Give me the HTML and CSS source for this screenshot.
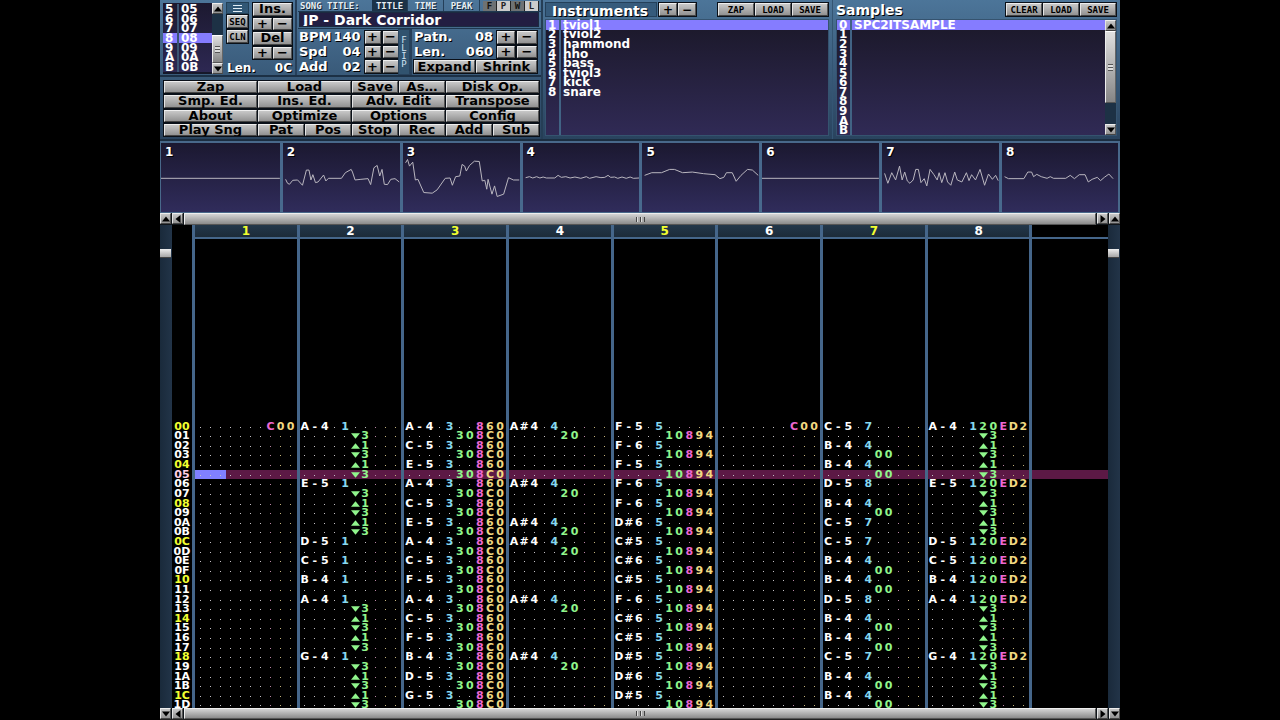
FILE: index.html
```html
<!DOCTYPE html>
<html lang="en">
<head>
<meta charset="utf-8">
<title>JP - Dark Corridor</title>
<link rel="stylesheet" href="styles.css">
</head>
<body>
<main class="app">
  <div class="top">
    <div class="left">
      <div class="control-row">
        <section class="orders">
          <ol class="order-list" aria-label="Order list">
            <li><b>5</b><span>05</span></li><li><b>6</b><span>06</span></li><li><b>7</b><span>07</span></li><li class="selected"><b>8</b><span>08</span></li><li><b>9</b><span>09</span></li><li><b>A</b><span>0A</span></li><li><b>B</b><span>0B</span></li>
          </ol>
          <div class="vscroll">
            <button class="btn arrow" aria-label="Order up"><svg viewBox="0 0 8 5"><path d="M4 0L8 5H0z"/></svg></button>
            <div class="track"><div class="thumb order-thumb"><i class="grip"></i></div></div>
            <button class="btn arrow" aria-label="Order down"><svg viewBox="0 0 8 5"><path d="M0 0H8L4 5z"/></svg></button>
          </div>
          <div class="order-tools">
            <div class="mini-col">
              <button class="menu" aria-label="Menu"><svg viewBox="0 0 9 7"><path d="M0 0H9V1H0zM0 3H9V4H0zM0 6H9V7H0z"/></svg></button>
              <button class="btn tiny">SEQ</button>
              <button class="btn tiny">CLN</button>
            </div>
            <div class="ins-grid">
              <button class="btn wide">Ins.</button>
              <button class="btn">+</button><button class="btn">−</button>
              <button class="btn wide">Del</button>
              <button class="btn">+</button><button class="btn">−</button>
            </div>
            <div class="order-len"><span>Len.</span><span>0C</span></div>
          </div>
        </section>
        <section class="song">
          <div class="tabs">
            <label for="song">SONG TITLE:</label>
            <button class="tab on">TITLE</button><button class="tab">TIME</button><button class="tab">PEAK</button>
            <div class="flags"><button class="flag on">F</button><button class="flag">P</button><button class="flag on">W</button><button class="flag">L</button></div>
          </div>
          <input id="song" class="title" type="text" value="JP - Dark Corridor">
          <div class="params">
            <div class="param-block tempo">
              <div class="param"><span>BPM</span><span>140</span><button class="btn">+</button><button class="btn">−</button></div>
              <div class="param"><span>Spd</span><span>04</span><button class="btn">+</button><button class="btn">−</button></div>
              <div class="param"><span>Add</span><span>02</span><button class="btn">+</button><button class="btn">−</button></div>
            </div>
            <button class="flip" aria-label="FLIP"><span>F</span><span>L</span><span>I</span><span>P</span></button>
            <div class="param-block patn">
              <div class="param"><span>Patn.</span><span>08</span><button class="btn">+</button><button class="btn">−</button></div>
              <div class="param"><span>Len.</span><span>060</span><button class="btn">+</button><button class="btn">−</button></div>
              <div class="pair"><button class="btn">Expand</button><button class="btn">Shrink</button></div>
            </div>
          </div>
        </section>
      </div>
      <nav class="commands">
        <button class="btn wide">Zap</button><button class="btn wide">Load</button><button class="btn">Save</button><button class="btn">As…</button><button class="btn wide">Disk Op.</button>
        <button class="btn wide">Smp. Ed.</button><button class="btn wide">Ins. Ed.</button><button class="btn wide">Adv. Edit</button><button class="btn wide">Transpose</button>
        <button class="btn wide">About</button><button class="btn wide">Optimize</button><button class="btn wide">Options</button><button class="btn wide">Config</button>
        <button class="btn wide">Play Sng</button><button class="btn">Pat</button><button class="btn">Pos</button><button class="btn">Stop</button><button class="btn">Rec</button><button class="btn">Add</button><button class="btn">Sub</button>
      </nav>
    </div>
    <section class="bank">
      <header><h2 class="boxed">Instruments</h2><button class="btn sign">+</button><button class="btn sign">−</button><span class="space"></span><button class="btn tiny act">ZAP</button><button class="btn tiny act">LOAD</button><button class="btn tiny act">SAVE</button></header>
      <div class="list-box">
        <ol class="list" aria-label="Instruments">
          <li class="selected"><b>1</b><span>tviol1</span></li><li><b>2</b><span>tviol2</span></li><li><b>3</b><span>hammond</span></li><li><b>4</b><span>hho</span></li><li><b>5</b><span>bass</span></li><li><b>6</b><span>tviol3</span></li><li><b>7</b><span>kick</span></li><li><b>8</b><span>snare</span></li><li><b></b></li><li><b></b></li><li><b></b></li><li><b></b></li>
        </ol>
      </div>
    </section>
    <section class="bank">
      <header><h2>Samples</h2><span class="space"></span><button class="btn tiny act">CLEAR</button><button class="btn tiny act">LOAD</button><button class="btn tiny act">SAVE</button></header>
      <div class="list-box">
        <ol class="list" aria-label="Samples">
          <li class="selected"><b>0</b><span>SPC2ITSAMPLE</span></li><li><b>1</b></li><li><b>2</b></li><li><b>3</b></li><li><b>4</b></li><li><b>5</b></li><li><b>6</b></li><li><b>7</b></li><li><b>8</b></li><li><b>9</b></li><li><b>A</b></li><li><b>B</b></li>
        </ol>
        <div class="vscroll">
          <button class="btn arrow" aria-label="Samples up"><svg viewBox="0 0 8 5"><path d="M4 0L8 5H0z"/></svg></button>
          <div class="track"><div class="thumb sample-thumb"><i class="grip"></i></div></div>
          <button class="btn arrow" aria-label="Samples down"><svg viewBox="0 0 8 5"><path d="M0 0H8L4 5z"/></svg></button>
        </div>
      </div>
    </section>
  </div>

  <section class="scopes" id="scopes" aria-label="Channel scopes"></section>

  <div class="hscroll">
    <button class="btn arrow" aria-label="Up"><svg viewBox="0 0 8 5"><path d="M4 0L8 5H0z"/></svg></button>
    <button class="btn arrow" aria-label="Left"><svg viewBox="0 0 5 8"><path d="M5 0V8L0 4z"/></svg></button>
    <div class="bar"><i class="grip up"></i></div>
    <button class="btn arrow" aria-label="Right"><svg viewBox="0 0 5 8"><path d="M0 0L5 4L0 8z"/></svg></button>
    <button class="btn arrow" aria-label="Up"><svg viewBox="0 0 8 5"><path d="M4 0L8 5H0z"/></svg></button>
  </div>

  <div class="tracker">
    <div class="rail"><div class="knob"></div></div>
    <table class="pattern">
      <thead><tr><th></th><th>1</th><th>2</th><th>3</th><th>4</th><th>5</th><th>6</th><th>7</th><th>8</th><th></th></tr></thead>
      <tbody id="rows"></tbody>
    </table>
    <div class="rail"><div class="knob"></div></div>
  </div>

  <div class="hscroll bottom">
    <button class="btn arrow" aria-label="Down"><svg viewBox="0 0 8 5"><path d="M0 0H8L4 5z"/></svg></button>
    <button class="btn arrow" aria-label="Left"><svg viewBox="0 0 5 8"><path d="M5 0V8L0 4z"/></svg></button>
    <div class="bar"><i class="grip up"></i></div>
    <button class="btn arrow" aria-label="Right"><svg viewBox="0 0 5 8"><path d="M0 0L5 4L0 8z"/></svg></button>
    <button class="btn arrow" aria-label="Down"><svg viewBox="0 0 8 5"><path d="M0 0H8L4 5z"/></svg></button>
  </div>
</main>
<script src="app.js"></script>
</body>
</html>
```
FILE: styles.css
```css
* { box-sizing: border-box; }
body { margin: 0; background: #000; color: #fff; font: bold 12px/10px "DejaVu Sans", sans-serif; }
button, input { font: inherit; margin: 0; padding: 0; border: 0; border-radius: 0; }
ol { list-style: none; margin: 0; padding: 0; }
h2 { margin: 0; font-size: 14px; line-height: 16px; text-shadow: 1px 1px #000; }
b { font-weight: inherit; }
svg { display: block; }

.app { display: flex; flex-direction: column; width: 100%; max-width: 960px; height: 100vh; margin: 0 auto; overflow: hidden; }

.btn {
  display: flex; align-items: center; justify-content: center; min-width: 0; min-height: 0;
  color: #000; white-space: nowrap; background: linear-gradient(#c8c8c8, #929292);
  border: 1px solid; border-color: #eee #555 #444 #e4e4e4; outline: 1px solid #0a1018; outline-offset: 0; text-shadow: none;
}
.tiny { font-family: "DejaVu Sans Mono", monospace; font-size: 9px; }
.arrow { width: 11px; height: 11px; flex: none; outline-width: 0; }
.arrow svg { width: 8px; height: 8px; }

.top { display: grid; grid-template-columns: 383fr 289fr 288fr; grid-template-rows: minmax(0, 1fr); height: 141px; flex: none; background: linear-gradient(#4c7599, #29435e); border-bottom: 2px solid #1b2d40; }
.left { display: flex; flex-direction: column; border-right: 2px solid #253e56; min-width: 0; }
.control-row { display: grid; grid-template-columns: 137fr 244fr; grid-template-rows: minmax(0, 1fr); height: 77px; flex: none; border-bottom: 2px solid #1c3045; }

.orders { display: flex; padding: 3px 0 1px 3px; border-right: 2px solid #263f59; min-width: 0; }
.order-list { display: grid; grid-template-rows: repeat(7, minmax(0, 1fr)); width: 49px; padding-top: 1px; border-bottom: 2px solid #16182a; background: linear-gradient(#1c1930, #2d2852); }
.order-list li { display: flex; align-items: center; min-height: 0; }
.order-list b { width: 14px; padding-left: 2px; flex: none; }
.order-list li::before { content: ""; width: 2px; align-self: stretch; order: 1; background: #3a5573; }
.order-list span { padding-left: 2px; order: 2; }
.selected { background: #857cff; }

.vscroll { display: flex; flex-direction: column; width: 11px; flex: none; background: #1d3145; }
.track { flex: 1; display: flex; flex-direction: column; min-height: 0; }
.thumb { display: flex; align-items: center; justify-content: center; background: linear-gradient(#e0e0e0, #858585); border: 1px solid; border-color: #fff #666 #555 #eee; }
.order-thumb { height: 28px; margin-top: auto; }
.sample-thumb { height: 72px; }
.grip { width: 5px; height: 7px; background: repeating-linear-gradient(#555 0 1px, #ddd 1px 3px); }
.grip.up { width: 9px; height: 5px; background: repeating-linear-gradient(90deg, #444 0 1px, #ddd 1px 2px, #aaa 2px 4px); }

.order-tools { flex: 1; display: grid; grid-template-columns: 21px 1fr; grid-template-rows: 56px minmax(0, 1fr); gap: 2px 5px; padding: 0 3px 0 4px; min-width: 0; }
.mini-col { display: grid; grid-template-rows: 10px 13px 13px; gap: 2px; }
.menu { display: flex; align-items: center; justify-content: center; background: #315775; outline: 1px solid #234056; }
.menu svg { width: 9px; height: 7px; fill: #e2edf4; }
.ins-grid { display: grid; grid-template-columns: 1fr 1fr; grid-template-rows: repeat(4, minmax(0, 1fr)); gap: 2px 1px; font-size: 13px; }
.wide { grid-column: span 2; }
.order-len { grid-column: 1 / 3; display: flex; align-items: center; justify-content: space-between; text-shadow: 1px 1px #000; }

.song { display: flex; flex-direction: column; min-width: 0; padding-left: 1px; }
.tabs { display: flex; height: 12px; flex: none; align-items: center; font: bold 9px/10px "DejaVu Sans Mono", monospace; color: #e5edf2; text-shadow: 1px 1px #102030; border-bottom: 1px solid #1f3850; }
.tabs label { flex: 1; padding-left: 2px; white-space: nowrap; }
.tab { color: inherit; text-shadow: inherit; background: none; width: 36px; height: 11px; text-align: center; border-right: 1px solid #243f59; }
.tab.on { background: #1c3348; }
.flags { display: flex; margin: 0 2px 0 3px; }
.flag { width: 14px; height: 10px; background: #ccc; color: #222; border-right: 1px solid #222; }
.flag.on { background: #6e7274; color: #111; }
.title { height: 13px; flex: none; margin: 1px 3px 2px 2px; padding: 0 3px; color: #fff; font-size: 14px; line-height: 13px; background: #221e42; outline: 1px solid #1b2a40; min-width: 0; }
.params { flex: 1; display: grid; grid-template-columns: 100fr 12px 131fr; grid-template-rows: minmax(0, 1fr); border-top: 1px solid #1f3850; min-height: 0; }
.param-block { display: grid; grid-template-rows: repeat(3, minmax(0, 1fr)); gap: 2px; padding: 2px 4px 2px 1px; min-width: 0; min-height: 0; }
.patn { border-left: 2px solid #263f59; padding-left: 2px; }
.param { display: grid; grid-template-columns: 1fr auto 16px 16px; grid-template-rows: minmax(0, 1fr); gap: 0 2px; font-size: 13px; text-shadow: 1px 1px #000; }
.param span { align-self: center; }
.patn .param { grid-template-columns: 1fr auto 18px 20px; }
.param span:nth-child(2) { padding-right: 2px; }
.flip { display: flex; flex-direction: column; justify-content: center; align-items: center; color: #cfe2ef; background: #31536f; font: 9px/8px "DejaVu Sans Mono", monospace; outline: 1px solid #28425c; margin: 1px; }
.pair { display: grid; grid-template-columns: 1fr 1fr; grid-template-rows: minmax(0, 1fr); gap: 1px; font-size: 13px; }

.commands { flex: 1; display: grid; grid-template-columns: repeat(8, 1fr); grid-template-rows: repeat(4, minmax(0, 1fr)); gap: 2px 1px; padding: 4px 2px 3px 4px; font-size: 13px; min-height: 0; }

.bank { display: flex; flex-direction: column; padding: 2px 3px 3px 2px; min-width: 0; }
.bank + .bank { padding-left: 3px; border-left: 1px solid #345573; }
.bank header { display: flex; height: 15px; flex: none; gap: 1px; margin-bottom: 2px; padding-right: 1px; }
.boxed { width: 112px; padding-left: 6px; background: #365b7c; border: 1px solid #24405a; }
h2.boxed + .btn { margin-left: 1px; }
.sign { width: 18px; height: 13px; margin-top: 1px; }
.space { flex: 1; }
.act { width: 36px; height: 13px; margin-top: 1px; font-size: 9px; }
.list-box { flex: 1; display: flex; min-height: 0; border: 1px solid #35536f; }
.list { flex: 1; display: grid; grid-template-rows: repeat(12, minmax(0, 1fr)); background: linear-gradient(#1b1829, #302a55); min-width: 0; }
.list li { display: flex; align-items: center; min-height: 0; }
.list b { width: 13px; padding-left: 2px; flex: none; }
.list li::before { content: ""; width: 2px; align-self: stretch; order: 1; background: #416384; }
.list span { padding-left: 2px; order: 2; }

.scopes { display: grid; grid-template-columns: minmax(0, 122fr) repeat(6, minmax(0, 120fr)) minmax(0, 116fr); height: 72px; flex: none; border: solid #48688a; border-width: 2px 2px 2px 1px; }
.scope { position: relative; background: linear-gradient(#1b1830, #302c5b); border-right: 3px solid #48698d; min-width: 0; }
.scope:last-child { border-right: 0; }
.scope svg { width: 100%; height: 100%; }
.scope path { fill: none; stroke: #b9b6bf; stroke-width: 1px; vector-effect: non-scaling-stroke; }
.scope span { position: absolute; left: 4px; top: 4px; text-shadow: 1px 1px #000; }

.hscroll { display: flex; gap: 1px; height: 12px; flex: none; background: #10151a; }
.bar { flex: 1; display: flex; align-items: center; justify-content: center; background: linear-gradient(#d4d4d4, #8b8b8b); border: 1px solid; border-color: #eee #555 #555 #eee; }
.bottom { border-bottom: 1px solid #222; }

.tracker { flex: 1; display: flex; min-height: 0; overflow: hidden; }
.rail { width: 12px; flex: none; padding-top: 24px; background: linear-gradient(90deg, #1a2a3b, #223448); }
.knob { height: 9px; margin-right: 1px; background: linear-gradient(#eee, #a6a6a6); border-bottom: 1px solid #444; }
.pattern { flex: 1; display: flex; flex-direction: column; min-width: 0; margin-bottom: -2px; }
.pattern tr { display: grid; grid-template-columns: 20px repeat(8, minmax(0, 4fr)) 3fr; min-height: 0; }
.pattern th, .pattern td { padding: 0; min-width: 0; min-height: 0; }
.pattern tbody { flex: 1; display: grid; grid-template-rows: repeat(49, minmax(0, 1fr)); min-height: 0; font-size: 11px; }
.pattern thead th { height: 14px; line-height: 12px; border-left: 3px solid #45668a; border-bottom: 2px solid #45668a; background: linear-gradient(#23374a, #1c2b39); }
.pattern thead th:nth-child(even) { color: #f2ff30; }
.pattern thead th:first-child { border: 0; background: none; }
.pattern thead th:last-child { background: none; color: #fff; }
.pattern tbody th { text-align: center; }
.beat th { color: #f2ff30; }
.playing th { color: #ffd0e6; }
.pattern tbody td { display: grid; grid-template-columns: repeat(10, minmax(0, 1fr)); justify-items: center; padding-right: 1px; border-left: 3px solid #45668a; }
.pattern .playing td { background: #5c1945; background-clip: padding-box; }
.pattern .playing td.cursor { background: linear-gradient(90deg, #8080ff 30%, #5c1945 30%) padding-box; }
.dot::after { content: ""; display: block; width: 1px; height: 1px; margin-top: 5px; background: #c2bfc4; }
.dot.fx::after { background: #b884a4; }
.dot.pm::after { background: #c2b27a; }
.note { color: #fff; }
.ins { color: #86d8ef; }
.vol { color: #90f58c; }
.fx { color: #ed68d2; }
.pm { color: #f1d982; }
.slide { width: 9px; height: 6px; margin-top: 2px; fill: #90f58c; }
```
FILE: app.js
```js
const LEAD_ROWS = 19;
const ROWS = 30;
const PLAYING = 5;
const SLIDE_ROWS = [1, 2, 3, 4, 5, 7, 8, 9, 10, 11, 19, 20, 21, 22, 23, 25, 26, 27, 28, 29];
const KINDS = ['note', 'note', 'note', 'ins', 'ins', 'vol', 'vol', 'fx', 'pm', 'pm'];

const blank = () => Array.from({ length: ROWS }, () => '..........');
const channels = Array.from({ length: 8 }, blank);
const melody = { 0: 'A-4', 6: 'E-5', 12: 'D-5', 14: 'C-5', 16: 'B-4', 18: 'A-4', 24: 'G-4' };

channels[0][0] = channels[5][0] = '.......C00';
for (const r of SLIDE_ROWS) {
  channels[1][r] = channels[7][r] = r % 2 ? '.....v3...' : '.....^1...';
}
for (const r in melody) {
  channels[1][r] = melody[r] + '.1.....';
  channels[7][r] = melody[r] + '.120ED2';
}
'A-4 C-5 E-5 A-4 C-5 E-5 A-4 C-5 F-5 A-4 C-5 F-5 B-4 D-5 G-5'.split(' ').forEach((n, i) => {
  channels[2][i * 2] = n + '.3..860';
  channels[2][i * 2 + 1] = '.....308C0';
});
for (const r of [0, 6, 10, 12, 18, 24]) {
  channels[3][r] = 'A#4.4.....';
  channels[3][r + 1] = '.....20...';
}
'F-5 F-6 F-5 F-6 F-6 D#6 C#5 C#6 C#5 F-6 C#6 C#5 D#5 D#6 D#5'.split(' ').forEach((n, i) => {
  channels[4][i * 2] = n + '.5.....';
  channels[4][i * 2 + 1] = '.....10894';
});
'C-5.7 B-4.4 B-4.4 D-5.8 B-4.4 C-5.7 C-5.7 B-4.4 B-4.4 D-5.8 B-4.4 B-4.4 C-5.7 B-4.4 B-4.4'.split(' ').forEach((n, i) => {
  channels[6][i * 2] = n + '.....';
});
for (const r of [3, 5, 9, 15, 17, 21, 23, 27, 29]) channels[6][r] = '.....00...';

function glyph(ch, kind) {
  if (ch === '.') return `<i class="dot ${kind}"></i>`;
  if (ch === 'v') return '<svg class="slide" viewBox="0 0 8 5"><path d="M0 0H8L4 5z"/></svg>';
  if (ch === '^') return '<svg class="slide" viewBox="0 0 8 5"><path d="M4 0L8 5H0z"/></svg>';
  return `<span class="${kind}">${ch}</span>`;
}

let html = '';
for (let i = 0; i < LEAD_ROWS; i++) html += '<tr><th></th>' + '<td></td>'.repeat(9) + '</tr>';
for (let r = 0; r < ROWS; r++) {
  const cls = (r % 4 ? '' : 'beat ') + (r === PLAYING ? 'playing' : '');
  html += `<tr class="${cls}"><th>${r.toString(16).toUpperCase().padStart(2, '0')}</th>`;
  channels.forEach((c, n) => {
    const cursor = r === PLAYING && n === 0 ? ' class="cursor"' : '';
    html += `<td${cursor}>` + [...c[r]].map((ch, k) => glyph(ch, KINDS[k])).join('') + '</td>';
  });
  html += '<td></td></tr>';
}
document.getElementById('rows').innerHTML = html;

const WAVES = [
  '0 107 360 107',
  '8 110 14 122 20 125 30 113 45 112 60 128 72 82 80 82 86 112 92 96 100 120 108 118 125 97 132 115 140 107 180 107 192 90 210 80 214 88 222 112 240 110 262 108 270 126 280 75 290 68 298 100 305 80 312 125 322 126 332 110 345 108 358 118',
  '8 60 14 50 20 70 30 58 38 112 46 110 64 150 90 152 105 142 130 107 145 106 152 128 162 102 175 100 182 65 190 70 195 85 205 68 220 55 235 56 244 115 252 113 258 140 262 110 274 155 282 130 290 162 310 155 325 105 340 112 358 112',
  '8 105 20 102 30 106 42 102 52 106 62 103 72 106 98 106 108 98 118 104 132 102 145 106 160 103 178 107 195 102 205 107 225 102 240 105 252 104 262 98 270 104 282 103 292 107 305 103 318 107 330 103 340 107 358 106',
  '8 98 30 90 60 90 85 80 100 80 125 90 155 88 190 93 225 96 240 108 252 104 260 90 278 90 290 116 305 98 325 80 340 82 358 98',
  '0 107 360 107',
  '8 92 18 122 30 90 42 112 54 70 62 112 70 88 78 115 86 122 96 112 104 80 112 80 120 120 130 108 138 130 148 80 160 96 170 112 176 90 184 120 194 90 202 118 212 128 224 88 232 112 246 118 260 90 268 114 276 96 288 112 302 80 316 128 328 94 340 110 350 98 358 114',
  '8 102 20 108 68 108 80 88 92 88 98 102 108 95 122 102 140 107 150 102 160 107 198 107 212 98 225 108 240 96 258 96 268 118 280 110 296 104 306 114 318 104 332 94 345 108'
];
document.getElementById('scopes').innerHTML = WAVES.map((w, i) =>
  `<div class="scope"><svg viewBox="0 0 360 210" preserveAspectRatio="none"><path d="M${w}"/></svg><span>${i + 1}</span></div>`
).join('');
```
